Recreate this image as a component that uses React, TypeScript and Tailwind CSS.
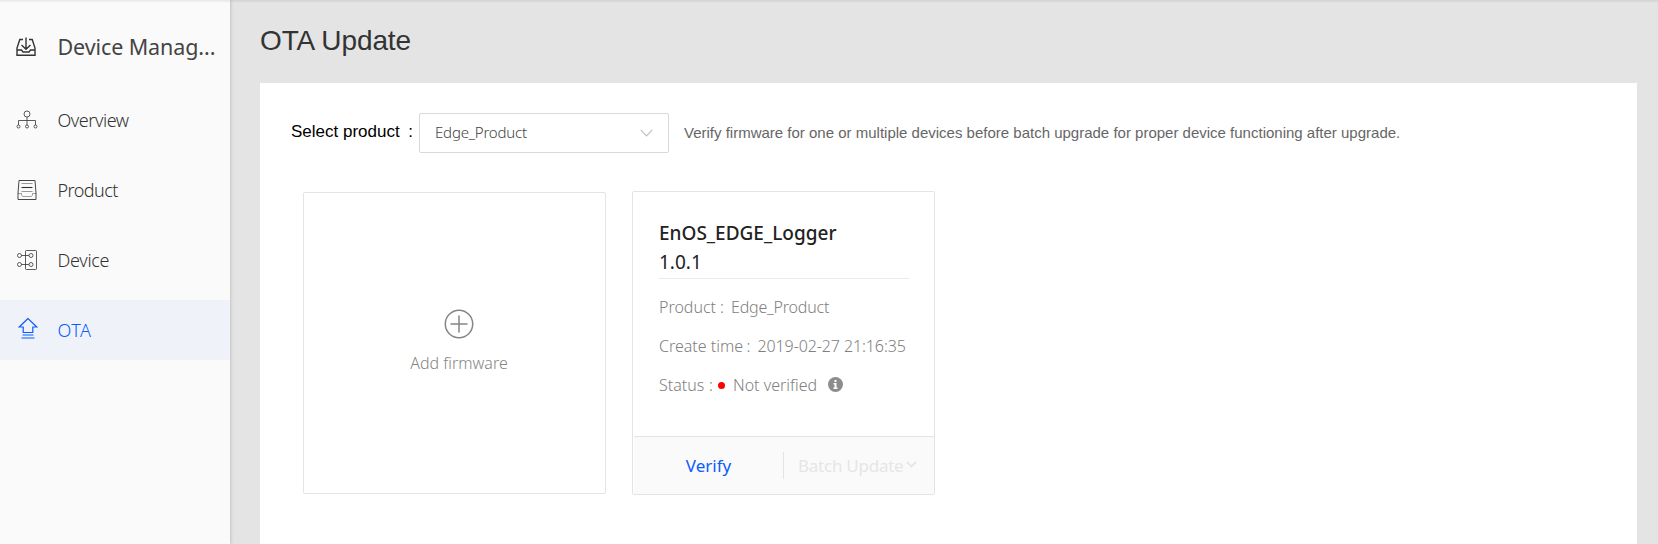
import React from "react";

type IconProps = { className?: string };

const ManageIcon = ({ className }: IconProps) => (
  <svg className={className} width="20" height="20" viewBox="0 0 20 20" fill="none" stroke="currentColor" strokeWidth="1.4">
    <path d="M7 2.500H3.800L1 11v7.200h18V11l-2.800-8.500H13M1 13h4.500l1.500 2h6l1.500-2H19M10 .5v11.500M5.500 8l4.500 4.300L14.500 8" />
  </svg>
);

const OverviewIcon = ({ className }: IconProps) => (
  <svg className={className} width="22" height="20" viewBox="0 0 22 20" fill="none" stroke="currentColor" strokeWidth="0.8">
    <circle cx="11" cy="4" r="3" />
    <path d="M11 7v8M2.500 15v-4.500h17V15" />
    <circle cx="2.500" cy="16.500" r="1.500" />
    <circle cx="11" cy="16.500" r="1.500" />
    <circle cx="19.500" cy="16.500" r="1.500" />
  </svg>
);

const ProductIcon = ({ className }: IconProps) => (
  <svg className={className} width="20" height="20" viewBox="0 0 20 20" fill="none" stroke="currentColor">
    <path strokeWidth="0.9" d="M2 .5h16l1 12.500v6.500H1V13z" />
    <path strokeWidth="1" opacity=".45" d="M1 13.500h3.500v1.500l1.200 1.500h8.600l1.200-1.500v-1.500H19" />
    <path strokeWidth="1" d="M4.500 3.500h11M4.500 11.500h11" opacity=".5" />
    <path strokeWidth="1.100" d="M4.500 7.500h11" />
  </svg>
);

const DeviceIcon = ({ className }: IconProps) => (
  <svg className={className} width="20" height="20" viewBox="0 0 20 20" fill="none" stroke="currentColor" strokeWidth="0.8">
    <rect x="8.500" y=".5" width="11" height="19" rx=".8" />
    <circle cx="2.500" cy="5.500" r="2" />
    <circle cx="2.500" cy="14.500" r="2" />
    <circle cx="14" cy="5.500" r="2" />
    <circle cx="14" cy="14.500" r="2" />
    <path d="M4.500 5.500h7.500M4.500 14.500h7.500" />
  </svg>
);

const OtaIcon = ({ className }: IconProps) => (
  <svg className={className} width="20" height="22" viewBox="0 0 20 22" fill="none" stroke="currentColor" strokeWidth="1.200">
    <path d="M10 1.500 1.200 10h4v5.500h9.600V10h4zM4.500 18h11M3.500 21h13" />
  </svg>
);

const navItems = [
  { label: "Overview", Icon: OverviewIcon, active: false, text: "tracking-[-0.45px]" },
  { label: "Product", Icon: ProductIcon, active: false, text: "tracking-[-0.55px]" },
  { label: "Device", Icon: DeviceIcon, active: false, text: "tracking-[-0.3px]" },
  { label: "OTA", Icon: OtaIcon, active: true, text: "tracking-[0.4px]" },
];

function Sidebar() {
  return (
    <aside className="z-10 flex w-[230px] shrink-0 flex-col bg-[#fafafa] font-['Noto_Sans',sans-serif] text-[#333] shadow-[1px_0_3px_rgba(0,0,0,0.15)]">
      <div className="flex h-[90px] items-center pt-[5px]">
        <span className="ml-4 flex w-[41.5px]">
          <ManageIcon className="-mt-0.5" />
        </span>
        <span className="text-[21.5px] font-normal tracking-[-0.1px] whitespace-nowrap text-[#444]">Device Manag...</span>
      </div>
      <nav className="flex flex-col gap-2.5">
        {navItems.map(({ label, Icon, active, text }) => (
          <a
            key={label}
            className={`flex h-[60px] items-center ${active ? "bg-[#f0f2f9] text-[#0b5cff]" : ""}`}
          >
            <span className="ml-4 flex w-[41.5px]">
              <span className="flex w-[22px]">
                <Icon className={active ? "ml-0.5 -mt-1" : label === "Overview" ? "" : "ml-px"} />
              </span>
            </span>
            <span className={`text-[18px] font-light ${text}`}>{label}</span>
          </a>
        ))}
      </nav>
    </aside>
  );
}

function AddFirmwareCard() {
  return (
    <button className="mt-px flex h-[302px] w-[303px] flex-col items-center rounded-[2px] border border-[#e4e4e4] pt-[116px] pl-[9px] text-[#858585]">
      <svg width="30" height="30" viewBox="0 0 30 30" fill="none" stroke="currentColor">
        <circle cx="15" cy="15" r="13.700" strokeWidth="1.500" />
        <path d="M15 6.500v17M6.500 15h17" strokeWidth="1.500" />
      </svg>
      <span className="mt-3 text-[16px] leading-6 font-light">Add firmware</span>
    </button>
  );
}

function FirmwareCard() {
  return (
    <article className="flex h-[304px] w-[303px] flex-col rounded-[2px] border border-[#e4e4e4]">
      <div className="flex grow flex-col pr-[25px] pl-[26px] pt-[26px] text-[#808080]">
        <div className="h-[61px] border-b border-[#ececec] text-[19px] leading-[30px] text-[#222]">
          <h2 className="font-medium">EnOS_EDGE_Logger</h2>
          <p className="-mt-px">1.0.1</p>
        </div>
        <dl className="mt-[9px] text-[16px] leading-[39px] font-light whitespace-nowrap">
          <div className="flex">
            <dt className="flex w-[72px] justify-between pr-[7px]"><span>Product</span><span>:</span></dt>
            <dd className="tracking-[-0.2px]">Edge_Product</dd>
          </div>
          <div className="flex">
            <dt className="flex w-[98.5px] justify-between pr-[7px]"><span>Create time</span><span>:</span></dt>
            <dd className="tracking-[-0.1px]">2019-02-27 21:16:35</dd>
          </div>
          <div className="flex items-center">
            <dt className="flex w-[59px] justify-between pr-[5px]"><span>Status</span><span>:</span></dt>
            <dd className="flex items-center">
              <i className="size-[7px] rounded-full bg-[#ff0000]" />
              <span className="ml-2">Not verified</span>
              <svg className="-mt-[3px] ml-[11px]" width="15" height="15" viewBox="0 0 15 15">
                <circle cx="7.500" cy="7.500" r="7.500" fill="#8c8c8c" />
                <path d="M6.500 3h2v2h-2zM5.500 6h3v4.500h1V12h-4v-1.500h1v-3h-1z" fill="#fff" />
              </svg>
            </dd>
          </div>
        </dl>
      </div>
      <footer className="ml-px flex h-[58px] items-center border-t border-[#e4e4e4] bg-[#fafafa] text-[17px]">
        <button className="w-[149px] text-[#0b5cff]">Verify</button>
        <span className="h-[27px] w-px bg-[#e4e4e4]" />
        <button className="ml-[14px] flex items-center text-[#e6e6e6]">
          <span className="w-[108px] text-left tracking-[-0.25px] whitespace-nowrap">Batch Update</span>
          <svg className="-mt-0.5" width="11" height="8" viewBox="0 0 11 8" fill="none" stroke="currentColor" strokeWidth="1.800">
            <path d="m1 1 4.500 4.500L10 1" />
          </svg>
        </button>
      </footer>
    </article>
  );
}

export default function App() {
  return (
    <div className="relative flex h-[544px] w-[1658px] overflow-hidden bg-[#e4e4e4] font-['Liberation_Sans',Arial,sans-serif]">
      <div className="absolute inset-x-0 top-0 z-20 h-[3px] bg-linear-to-b from-black/8 to-transparent" />
      <Sidebar />
      <main className="flex grow flex-col pr-[21px] pl-[30px]">
        <h1 className="flex h-[83px] items-center pb-px text-[28px] tracking-[-0.1px] text-[#333]">OTA Update</h1>
        <section className="grow bg-white pl-[30px]">
          <div className="flex h-[109px] items-start pt-[30px]">
            <label className="flex w-[129px] justify-between pr-[6px] pl-px text-[17px] leading-[38px] text-black">
              <span>Select product</span>
              <span>:</span>
            </label>
            <div className="flex h-10 w-[250px] items-center justify-between rounded-[2px] border border-[#d9d9d9] pr-[15px] pl-[15px] font-['Noto_Sans',sans-serif] text-[15px] font-light text-[#444]">
              <span className="-mt-0.5 tracking-[-0.2px]">Edge_Product</span>
              <svg width="13" height="8" viewBox="0 0 13 8" fill="none" stroke="#bfbfbf" strokeWidth="1.200">
                <path d="m.8.8 5.700 6 5.700-6" />
              </svg>
            </div>
            <p className="ml-[15px] text-[15px] leading-10 text-[#666]">
              Verify firmware for one or multiple devices before batch upgrade for proper device functioning after upgrade.
            </p>
          </div>
          <div className="-mt-px flex items-start gap-[26px] pl-[13px] font-['Noto_Sans',sans-serif]">
            <AddFirmwareCard />
            <FirmwareCard />
          </div>
        </section>
      </main>
    </div>
  );
}
